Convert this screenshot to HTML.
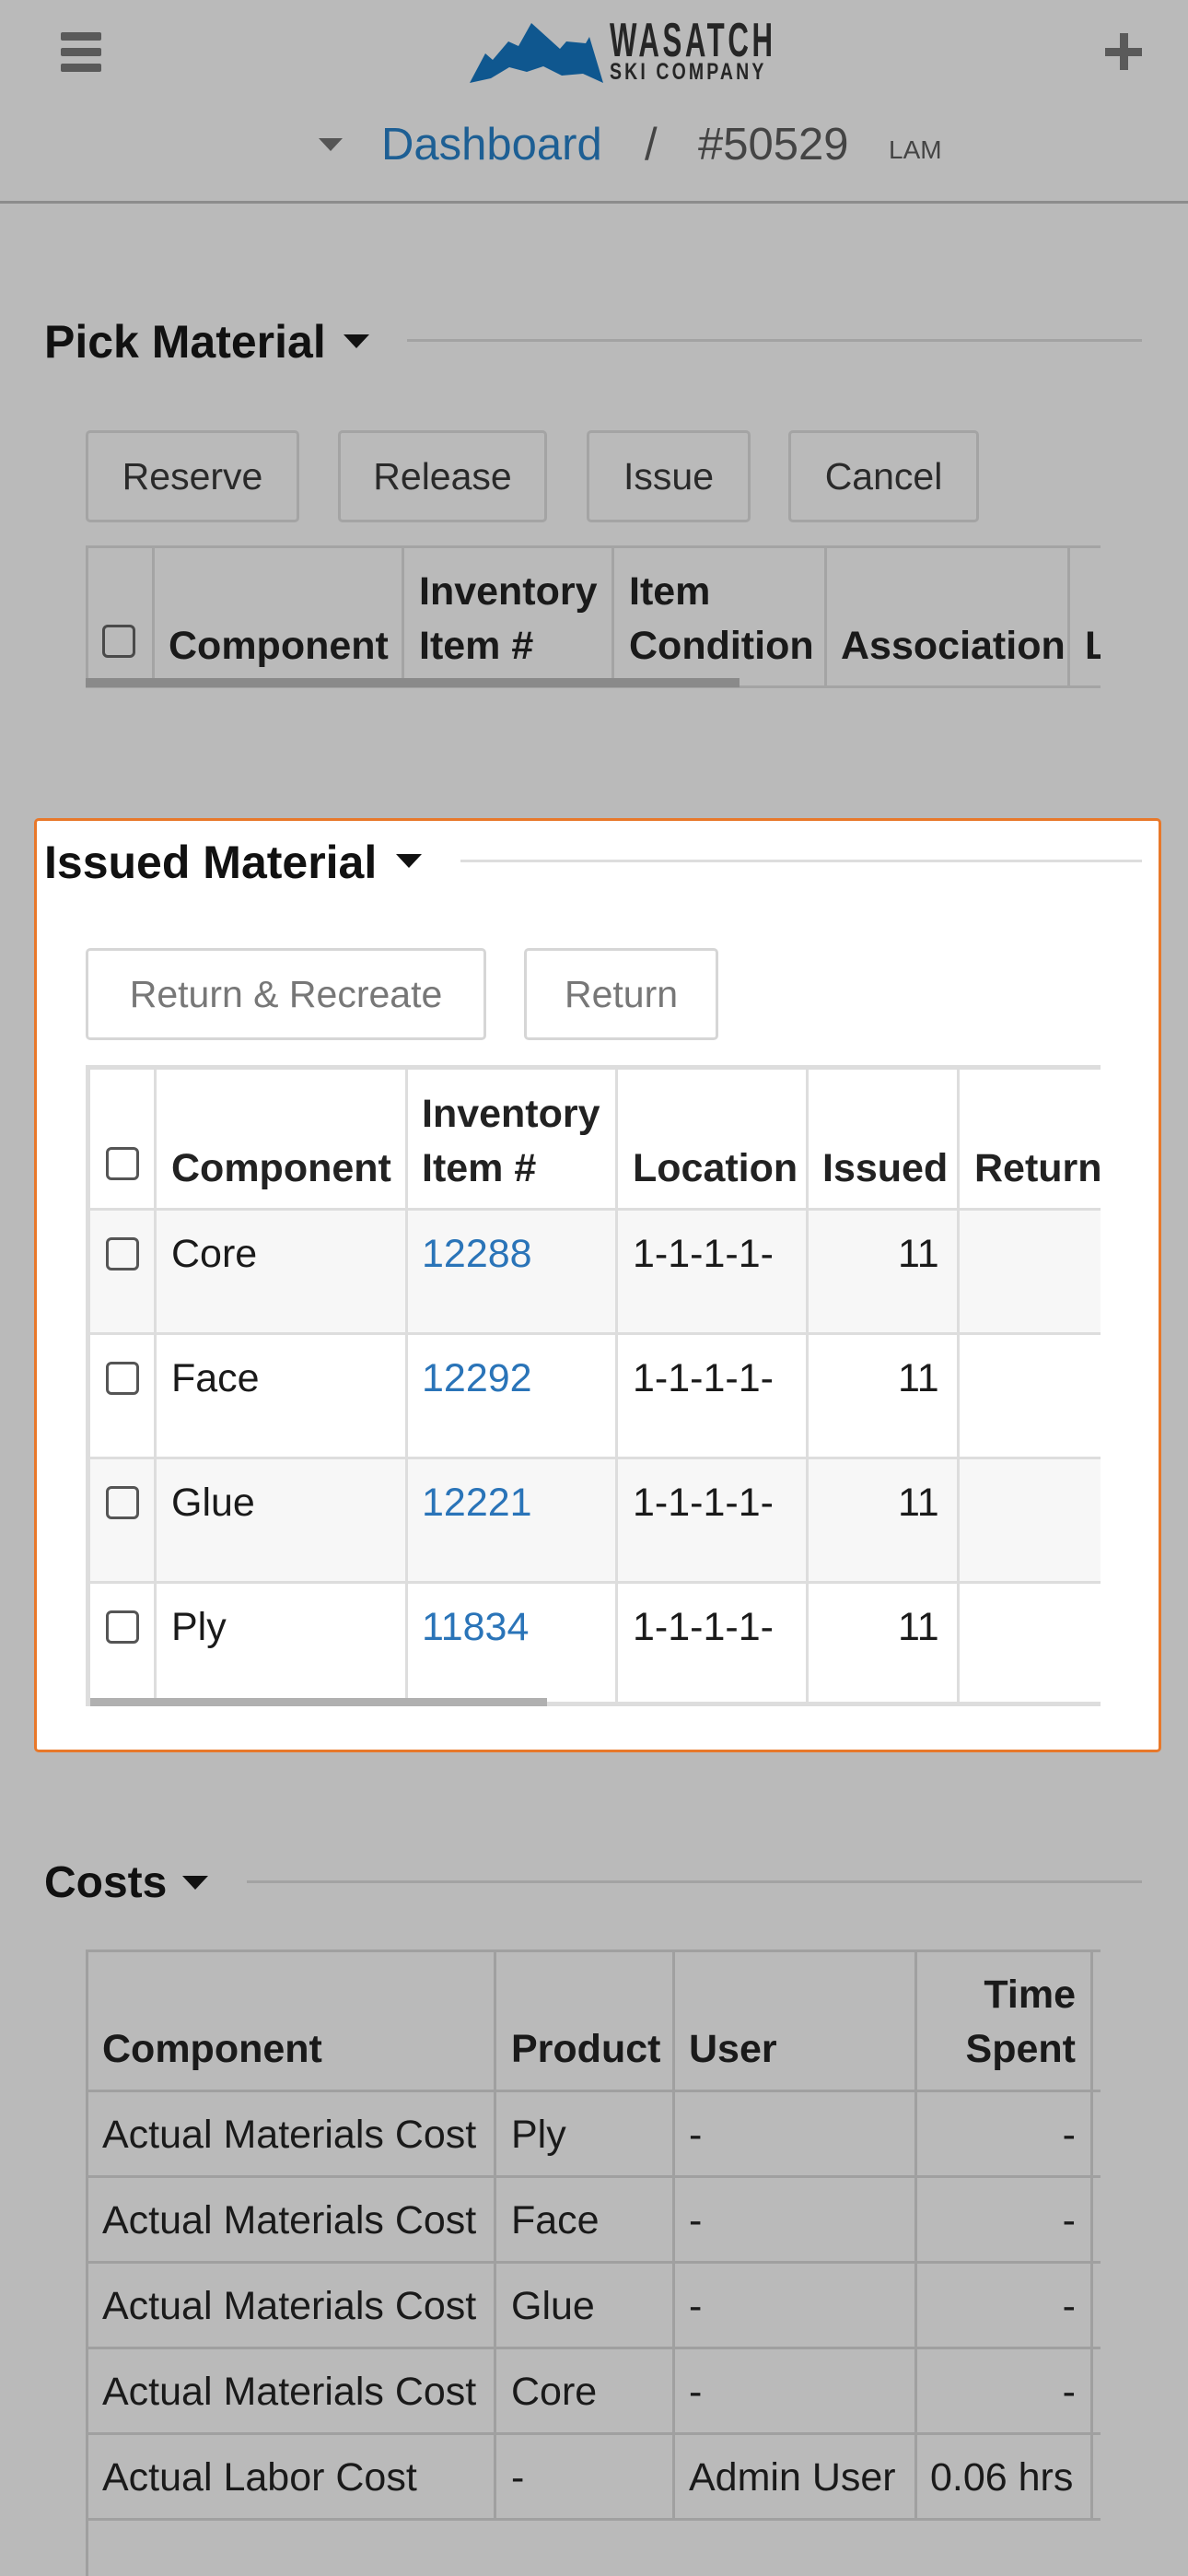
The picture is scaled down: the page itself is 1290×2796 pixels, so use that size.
<!DOCTYPE html>
<html><head><meta charset="utf-8">
<style>
*{margin:0;padding:0;box-sizing:border-box}
body{width:1290px;height:2796px;background:#bababa;font-family:"Liberation Sans",sans-serif;color:#1a1a1a;position:relative;overflow:hidden}
.a{position:absolute}
.h{font-weight:bold;font-size:48px;color:#111;line-height:1}
.tri{width:0;height:0;border-left:14px solid transparent;border-right:14px solid transparent;border-top:15px solid #111}
.hr{height:3px;background:#a3a3a3}
.btn{position:absolute;border:3px solid #a4a4a4;border-radius:5px;font-size:41px;color:#2a2a2a;display:flex;align-items:center;justify-content:center}
.cb{position:absolute;width:36px;height:36px;border:3px solid #555;border-radius:6px}
.t{position:absolute;font-size:43px;line-height:59px;white-space:nowrap}
.b{font-weight:bold}
.vl{position:absolute;width:3px}
.hl{position:absolute;height:3px}
</style></head><body>
<!-- header -->
<div class="a" style="left:66px;top:35px;width:44px;height:9px;background:#5a5a5a;border-radius:2px"></div>
<div class="a" style="left:66px;top:52px;width:44px;height:9px;background:#5a5a5a;border-radius:2px"></div>
<div class="a" style="left:66px;top:69px;width:44px;height:9px;background:#5a5a5a;border-radius:2px"></div>
<div class="a" style="left:1200px;top:52px;width:40px;height:9px;background:#5a5a5a"></div>
<div class="a" style="left:1216px;top:36px;width:9px;height:40px;background:#5a5a5a"></div>
<svg class="a" style="left:0;top:0" width="700" height="100"><polygon fill="#0f578f" points="510,90 527,58 535,65 552,45 563,50 577,25 608,53 615,45 636,47 640,40 655,90 633,80 610,82 590,72 572,78 553,73 533,85"/></svg>
<div class="a" style="left:662px;top:18px;font-weight:bold;font-size:52px;letter-spacing:6px;color:#262626;line-height:1;transform:scaleX(0.6);transform-origin:0 0;white-space:nowrap">WASATCH</div>
<div class="a" style="left:662px;top:66px;font-weight:bold;font-size:25px;letter-spacing:4px;color:#262626;line-height:1;transform:scaleX(0.78);transform-origin:0 0;white-space:nowrap">SKI COMPANY</div>
<div class="a tri" style="left:346px;top:150px;border-top-color:#555;border-left-width:13px;border-right-width:13px;border-top-width:14px"></div>
<div class="a" style="left:414px;top:133px;font-size:49px;color:#1d5f94;line-height:1">Dashboard</div>
<div class="a" style="left:700px;top:133px;font-size:49px;color:#444;line-height:1">/</div>
<div class="a" style="left:758px;top:133px;font-size:49px;color:#444;line-height:1">#50529</div>
<div class="a" style="left:965px;top:149px;font-size:28px;color:#444;line-height:1">LAM</div>
<div class="a" style="left:0;top:218px;width:1290px;height:3px;background:#8c8c8c"></div>

<!-- Pick material -->
<div class="a h" style="left:48px;top:346px;font-size:50px">Pick Material</div>
<div class="a tri" style="left:373px;top:363px"></div>
<div class="a hr" style="left:442px;top:368px;width:798px"></div>
<div class="btn" style="left:93px;top:467px;width:232px;height:100px">Reserve</div>
<div class="btn" style="left:367px;top:467px;width:227px;height:100px">Release</div>
<div class="btn" style="left:637px;top:467px;width:178px;height:100px">Issue</div>
<div class="btn" style="left:856px;top:467px;width:207px;height:100px">Cancel</div>
<div class="hl" style="left:93px;top:592px;width:1102px;background:#a4a4a4"></div>
<div class="hl" style="left:93px;top:744px;width:1102px;background:#a4a4a4"></div>
<div class="vl" style="left:93px;top:592px;height:154px;background:#a4a4a4"></div>
<div class="vl" style="left:165px;top:592px;height:154px;background:#a4a4a4"></div>
<div class="vl" style="left:436px;top:592px;height:154px;background:#a4a4a4"></div>
<div class="vl" style="left:664px;top:592px;height:154px;background:#a4a4a4"></div>
<div class="vl" style="left:895px;top:592px;height:154px;background:#a4a4a4"></div>
<div class="vl" style="left:1159px;top:592px;height:154px;background:#a4a4a4"></div>
<div class="a" style="left:93px;top:736px;width:710px;height:10px;background:#8a8a8a"></div>
<div class="cb" style="left:111px;top:678px;border-color:#4a4a4a"></div>
<div class="t b" style="left:183px;top:672px">Component</div>
<div class="t b" style="left:455px;top:613px">Inventory<br>Item #</div>
<div class="t b" style="left:683px;top:613px">Item<br>Condition</div>
<div class="t b" style="left:913px;top:672px">Association</div>
<div class="t b" style="left:1178px;top:672px;width:17px;overflow:hidden">L</div>

<!-- Issued material -->
<div class="a" style="left:37px;top:888px;width:1224px;height:1014px;background:#fff;border:3px solid #e8782a;border-radius:5px"></div>
<div class="a h" style="left:48px;top:911px;font-size:50px">Issued Material</div>
<div class="a tri" style="left:430px;top:927px"></div>
<div class="a hr" style="left:500px;top:933px;width:740px;background:#ddd"></div>
<div class="btn" style="left:93px;top:1029px;width:435px;height:100px;border-color:#d6d6d6;color:#777">Return &amp; Recreate</div>
<div class="btn" style="left:569px;top:1029px;width:211px;height:100px;border-color:#d6d6d6;color:#777">Return</div>
<div class="a" style="left:93px;top:1156px;width:1102px;height:696px;border:5px solid #ddd;border-right:none;overflow:hidden">
</div>
<div class="a" style="left:98px;top:1313px;width:1097px;height:134px;background:#f7f7f7"></div>
<div class="a" style="left:98px;top:1582px;width:1097px;height:136px;background:#f7f7f7"></div>
<div class="hl" style="left:93px;top:1311px;width:1102px;background:#ddd"></div>
<div class="hl" style="left:93px;top:1446px;width:1102px;background:#ddd"></div>
<div class="hl" style="left:93px;top:1581px;width:1102px;background:#ddd"></div>
<div class="hl" style="left:93px;top:1716px;width:1102px;background:#ddd"></div>
<div class="vl" style="left:167px;top:1156px;height:696px;background:#ddd"></div>
<div class="vl" style="left:440px;top:1156px;height:696px;background:#ddd"></div>
<div class="vl" style="left:668px;top:1156px;height:696px;background:#ddd"></div>
<div class="vl" style="left:875px;top:1156px;height:696px;background:#ddd"></div>
<div class="vl" style="left:1039px;top:1156px;height:696px;background:#ddd"></div>
<div class="a" style="left:98px;top:1843px;width:496px;height:9px;background:#b0b0b0"></div>
<div class="cb" style="left:115px;top:1245px"></div>
<div class="t b" style="left:186px;top:1239px;color:#222">Component</div>
<div class="t b" style="left:458px;top:1180px;color:#222">Inventory<br>Item #</div>
<div class="t b" style="left:687px;top:1239px;color:#222">Location</div>
<div class="t b" style="left:893px;top:1239px;color:#222">Issued</div>
<div class="t b" style="left:1058px;top:1239px;color:#222;width:137px;overflow:hidden">Return</div>

<div class="cb" style="left:115px;top:1343px"></div>
<div class="t" style="left:186px;top:1332px">Core</div>
<div class="t" style="left:458px;top:1332px;color:#2a74b8">12288</div>
<div class="t" style="left:687px;top:1332px">1-1-1-1-</div>
<div class="t" style="left:975px;top:1332px">11</div>
<div class="cb" style="left:115px;top:1478px"></div>
<div class="t" style="left:186px;top:1467px">Face</div>
<div class="t" style="left:458px;top:1467px;color:#2a74b8">12292</div>
<div class="t" style="left:687px;top:1467px">1-1-1-1-</div>
<div class="t" style="left:975px;top:1467px">11</div>
<div class="cb" style="left:115px;top:1613px"></div>
<div class="t" style="left:186px;top:1602px">Glue</div>
<div class="t" style="left:458px;top:1602px;color:#2a74b8">12221</div>
<div class="t" style="left:687px;top:1602px">1-1-1-1-</div>
<div class="t" style="left:975px;top:1602px">11</div>
<div class="cb" style="left:115px;top:1748px"></div>
<div class="t" style="left:186px;top:1737px">Ply</div>
<div class="t" style="left:458px;top:1737px;color:#2a74b8">11834</div>
<div class="t" style="left:687px;top:1737px">1-1-1-1-</div>
<div class="t" style="left:975px;top:1737px">11</div>

<!-- Costs -->
<div class="a h" style="left:48px;top:2020px">Costs</div>
<div class="a tri" style="left:198px;top:2036px"></div>
<div class="a hr" style="left:268px;top:2041px;width:972px"></div>
<div class="hl" style="left:93px;top:2116px;width:1102px;background:#a0a0a0"></div>
<div class="hl" style="left:93px;top:2268px;width:1102px;background:#a0a0a0"></div>
<div class="hl" style="left:93px;top:2361px;width:1102px;background:#a0a0a0"></div>
<div class="hl" style="left:93px;top:2454px;width:1102px;background:#a0a0a0"></div>
<div class="hl" style="left:93px;top:2547px;width:1102px;background:#a0a0a0"></div>
<div class="hl" style="left:93px;top:2640px;width:1102px;background:#a0a0a0"></div>
<div class="hl" style="left:93px;top:2733px;width:1102px;background:#a0a0a0"></div>
<div class="vl" style="left:93px;top:2116px;height:680px;background:#a0a0a0"></div>
<div class="vl" style="left:536px;top:2116px;height:620px;background:#a0a0a0"></div>
<div class="vl" style="left:730px;top:2116px;height:620px;background:#a0a0a0"></div>
<div class="vl" style="left:993px;top:2116px;height:620px;background:#a0a0a0"></div>
<div class="vl" style="left:1184px;top:2116px;height:620px;background:#a0a0a0"></div>
<div class="t b" style="left:111px;top:2195px">Component</div>
<div class="t b" style="left:555px;top:2195px">Product</div>
<div class="t b" style="left:748px;top:2195px">User</div>
<div class="t b" style="left:1000px;top:2136px;width:168px;text-align:right">Time<br>Spent</div>
<div class="t" style="left:111px;top:2288px">Actual Materials Cost</div>
<div class="t" style="left:555px;top:2288px">Ply</div>
<div class="t" style="left:748px;top:2288px">-</div>
<div class="t" style="left:1000px;top:2288px;width:168px;text-align:right">-</div>
<div class="t" style="left:111px;top:2381px">Actual Materials Cost</div>
<div class="t" style="left:555px;top:2381px">Face</div>
<div class="t" style="left:748px;top:2381px">-</div>
<div class="t" style="left:1000px;top:2381px;width:168px;text-align:right">-</div>
<div class="t" style="left:111px;top:2474px">Actual Materials Cost</div>
<div class="t" style="left:555px;top:2474px">Glue</div>
<div class="t" style="left:748px;top:2474px">-</div>
<div class="t" style="left:1000px;top:2474px;width:168px;text-align:right">-</div>
<div class="t" style="left:111px;top:2567px">Actual Materials Cost</div>
<div class="t" style="left:555px;top:2567px">Core</div>
<div class="t" style="left:748px;top:2567px">-</div>
<div class="t" style="left:1000px;top:2567px;width:168px;text-align:right">-</div>
<div class="t" style="left:111px;top:2660px">Actual Labor Cost</div>
<div class="t" style="left:555px;top:2660px">-</div>
<div class="t" style="left:748px;top:2660px">Admin User</div>
<div class="t" style="left:1010px;top:2660px">0.06 hrs</div>
</body></html>
